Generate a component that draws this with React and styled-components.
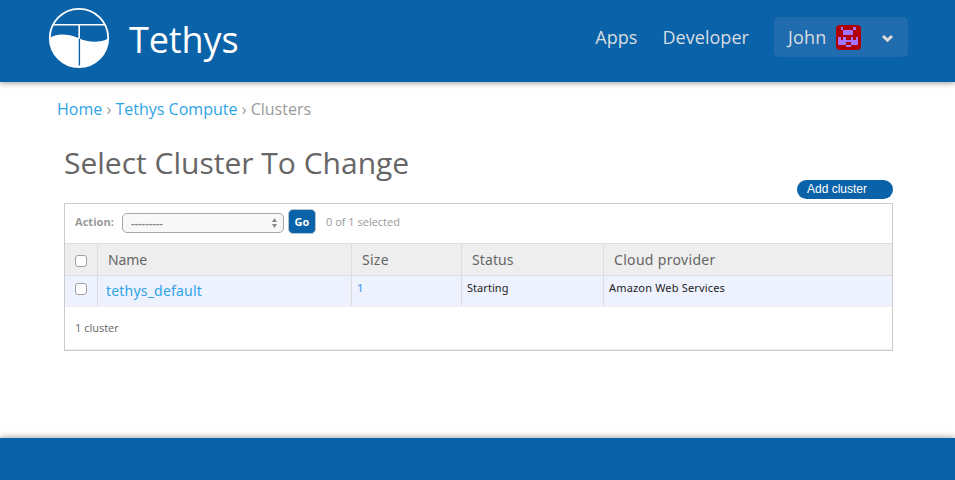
import React from "react";
import styled, { createGlobalStyle } from "styled-components";

const Global = createGlobalStyle`
  * { box-sizing: border-box; }
  body { margin: 0; background: #fff; font-family: "Open Sans", sans-serif; }
  a { text-decoration: none; }
`;

const Page = styled.div`
  height: 480px;
  display: flex;
  flex-direction: column;
  overflow: hidden;
`;

const Header = styled.header`
  height: 82px;
  flex: none;
  display: flex;
  align-items: flex-start;
  justify-content: space-between;
  padding: 0 47px 0 48px;
  background: #0a62a9;
  box-shadow: 0 1px 6px rgba(0, 0, 0, 0.4);
`;

const Brand = styled.a`
  display: flex;
  gap: 19px;
  padding-top: 7px;
  color: #fff;
`;

const BrandName = styled.span`
  font-size: 36px;
  font-weight: 400;
  line-height: 49px;
  padding-top: 8px;
  letter-spacing: -0.1px;
`;

const Nav = styled.nav`
  display: flex;
  align-items: center;
  padding-top: 17px;
`;

const NavLink = styled.a`
  color: #d8dde1;
  font-size: 18px;
  line-height: 40px;
  margin-right: 25px;
  letter-spacing: 0.05px;
`;

const UserMenu = styled.button`
  display: flex;
  align-items: center;
  width: 134px;
  height: 40px;
  padding: 0 14px;
  border: 0;
  border-radius: 5px;
  background: #206cae;
  color: #d8dde1;
  font: 18px/40px "Open Sans", sans-serif;
  text-align: left;
`;

const UserName = styled.span`
  width: 48px;
  letter-spacing: 0.15px;
`;

const Chevron = styled.svg`
  margin-left: 20px;
  margin-top: 3px;
`;

const Main = styled.main`
  flex: 1;
  padding: 16px 62px 0 57px;
`;

const Breadcrumbs = styled.div`
  font-size: 16px;
  line-height: 22px;
  color: #999;
  white-space: nowrap;
  letter-spacing: 0.01px;
  a { color: #2fa4e7; }
`;

const Content = styled.section`
  padding-left: 7px;
`;

const Title = styled.h1`
  margin: 22px 0 0;
  font-size: 30px;
  font-weight: 400;
  line-height: 41px;
  height: 38px;
  color: #666;
`;

const Tools = styled.div`
  display: flex;
  justify-content: flex-end;
  height: 23px;
`;

const AddButton = styled.a`
  width: 96px;
  height: 19px;
  padding-left: 10px;
  border-radius: 10px;
  background: #0a62a9;
  color: #fff;
  font: 12px/18px "Liberation Sans", sans-serif;
`;

const Module = styled.div`
  width: 829px;
  height: 148px;
  border: 1px solid #ccc;
`;

const Actions = styled.div`
  display: flex;
  align-items: center;
  height: 39px;
  padding: 0 10px 3px;
  font-size: 11px;
  color: #999;
`;

const ActionLabel = styled.label`
  width: 47px;
  margin-top: -1px;
  font-weight: 700;
  letter-spacing: 0.05px;
`;

const Select = styled.div`
  display: flex;
  align-items: center;
  justify-content: space-between;
  width: 162px;
  height: 20px;
  margin-top: 2px;
  padding: 0 6px 0 8px;
  border: 1px solid #a6a6a6;
  border-radius: 5px;
  background: #f8f8f8;
`;

const SelectValue = styled.span`
  margin-top: -2px;
  color: #888;
  font-weight: 700;
`;

const GoButton = styled.button`
  width: 28px;
  height: 25px;
  margin: -1px 10px 0 4px;
  padding: 0;
  border: 1px solid #b5c3cf;
  border-radius: 5px;
  background: #0a62a9;
  color: #fff;
  font: 700 11px "Open Sans", sans-serif;
`;

const Counter = styled.span`
  margin-top: -1px;
`;

const Row = styled.div`
  display: grid;
  grid-template-columns: 33px 254px 110px 142px 1fr;
  height: ${(p) => p.$height};
  border-top: ${(p) => (p.$head ? "1px solid #ddd" : "0")};
  border-bottom: 1px solid ${(p) => (p.$head ? "#ddd" : "#eee")};
  background: ${(p) => (p.$head ? "#eee" : "#edf2fe")};
`;

const Cell = styled.div`
  border-right: ${(p) => (p.$last ? "0" : "1px solid #ddd")};
  padding-left: 10px;
`;

const HeadCell = styled(Cell)`
  color: #666;
  font: 14px/31px "Noto Sans", sans-serif;
  letter-spacing: ${(p) => p.$spacing || "0.25px"};
`;

const DataCell = styled(Cell)`
  padding-left: 5px;
  color: #222;
  font: 11px/23px "Noto Sans", sans-serif;
  letter-spacing: ${(p) => p.$spacing || "0.05px"};
`;

const ClusterLink = styled.a`
  display: block;
  padding-left: 3px;
  color: #2fa4e7;
  font: 14px/29px "Noto Sans", sans-serif;
  letter-spacing: 0.2px;
`;

const SizeLink = styled.a`
  color: #4a9cf0;
  font-weight: 500;
`;

const Check = styled.input`
  appearance: none;
  display: block;
  width: 12px;
  height: 12px;
  margin: ${(p) => p.$top} 0 0;
  border: 1px solid #a0a0a0;
  border-radius: 3px;
  background: #fff;
`;

const Paginator = styled.div`
  height: 43px;
  padding-left: 10px;
  border-bottom: 1px solid #eee;
  font-size: 11px;
  line-height: 42px;
  color: #666;
`;

const Footer = styled.footer`
  height: 42px;
  background: #0a62a9;
  box-shadow: 0 -1px 6px rgba(0, 0, 0, 0.35);
`;

function Logo() {
  return (
    <svg width="62" height="62" viewBox="0 0 62 62" fill="none">
      <path d="M2 31C7 26.5 19 26 30.500 31C40 36 53 36 60 31.500A29 29 0 0 1 2 31Z" fill="#fff" />
      <circle cx="31" cy="31" r="29.2" stroke="#fff" strokeWidth="1.8" />
      <path d="M5 17.7H57M31.2 17.7V31" stroke="#fff" strokeWidth="1.6" />
      <path d="M31.4 32V58.5" stroke="#0a62a9" strokeWidth="1.4" />
    </svg>
  );
}

function Avatar() {
  return (
    <svg width="25" height="25" viewBox="0 0 25 25">
      <rect width="25" height="25" rx="4" fill="#b00000" />
      <path
        fill="#a374ff"
        d="M5 2h2v3h10v-3h3v3h-3v5h-10v-5h-2zM2 12h3v3h2v-3h3v3h5v-3h2v3h3v-3h2v8h-7v-3h-5v3h-8zM10 20h5v2h-5z"
      />
    </svg>
  );
}

export default function App() {
  return (
    <Page>
      <Global />
      <Header>
        <Brand href="#">
          <Logo />
          <BrandName>Tethys</BrandName>
        </Brand>
        <Nav>
          <NavLink href="#">Apps</NavLink>
          <NavLink href="#">Developer</NavLink>
          <UserMenu>
            <UserName>John</UserName>
            <Avatar />
            <Chevron width="13" height="9" viewBox="0 0 13 9" fill="none">
              <path d="M2 2L6.5 6.3L11 2" stroke="#dcdcdc" strokeWidth="3" />
            </Chevron>
          </UserMenu>
        </Nav>
      </Header>
      <Main>
        <Breadcrumbs>
          <a href="#">Home</a> › <a href="#">Tethys Compute</a> › Clusters
        </Breadcrumbs>
        <Content>
          <Title>Select Cluster To Change</Title>
          <Tools>
            <AddButton href="#">Add cluster</AddButton>
          </Tools>
          <Module>
            <Actions>
              <ActionLabel>Action:</ActionLabel>
              <Select>
                <SelectValue>---------</SelectValue>
                <svg width="5" height="10" viewBox="0 0 5 10" fill="#888">
                  <path d="M0 4L2.5 0L5 4ZM0 6H5L2.5 10Z" />
                </svg>
              </Select>
              <GoButton>Go</GoButton>
              <Counter>0 of 1 selected</Counter>
            </Actions>
            <Row $head $height="33px">
              <Cell><Check type="checkbox" $top="11px" /></Cell>
              <HeadCell $spacing="-0.1px">Name</HeadCell>
              <HeadCell>Size</HeadCell>
              <HeadCell $spacing="0.1px">Status</HeadCell>
              <HeadCell $last $spacing="0.32px">Cloud provider</HeadCell>
            </Row>
            <Row $height="31px">
              <Cell><Check type="checkbox" $top="7px" /></Cell>
              <DataCell><ClusterLink href="#">tethys_default</ClusterLink></DataCell>
              <DataCell><SizeLink href="#">1</SizeLink></DataCell>
              <DataCell>Starting</DataCell>
              <DataCell $last $spacing="0.17px">Amazon Web Services</DataCell>
            </Row>
            <Paginator>1 cluster</Paginator>
          </Module>
        </Content>
      </Main>
      <Footer />
    </Page>
  );
}
